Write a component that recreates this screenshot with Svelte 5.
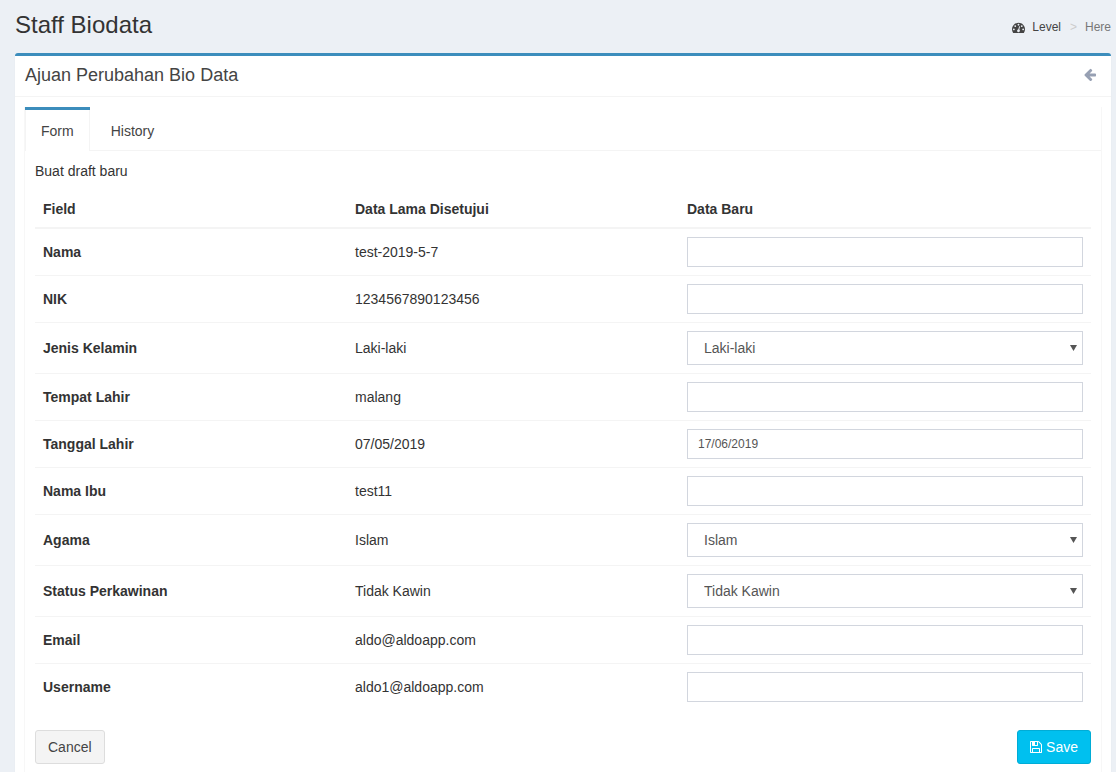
<script>
	const rows = [
		{ label: 'Nama', old: 'test-2019-5-7', type: 'text' },
		{ label: 'NIK', old: '1234567890123456', type: 'text' },
		{ label: 'Jenis Kelamin', old: 'Laki-laki', type: 'select', options: ['Laki-laki', 'Perempuan'] },
		{ label: 'Tempat Lahir', old: 'malang', type: 'text' },
		{ label: 'Tanggal Lahir', old: '07/05/2019', type: 'text', value: '17/06/2019' },
		{ label: 'Nama Ibu', old: 'test11', type: 'text' },
		{ label: 'Agama', old: 'Islam', type: 'select', options: ['Islam', 'Kristen', 'Hindu', 'Budha'] },
		{ label: 'Status Perkawinan', old: 'Tidak Kawin', type: 'select', options: ['Tidak Kawin', 'Kawin'] },
		{ label: 'Email', old: 'aldo@aldoapp.com', type: 'text' },
		{ label: 'Username', old: 'aldo1@aldoapp.com', type: 'text' }
	]
	let tab = 'Form'
</script>

<div class="page">
	<header class="content-header">
		<h1>Staff Biodata</h1>
		<ol class="breadcrumb">
			<li class="level">
				<svg class="gauge" viewBox="0 0 1792 1792" aria-hidden="true"><path fill="currentColor" d="M384 1152q0-53-37.5-90.5t-90.5-37.5-90.5 37.5-37.5 90.5 37.5 90.5 90.5 37.5 90.5-37.5 37.5-90.5zm192-448q0-53-37.5-90.5t-90.5-37.5-90.5 37.5-37.5 90.5 37.5 90.5 90.5 37.5 90.5-37.5 37.5-90.5zm428 481l101-382q6-26-7.5-48.5t-38.5-29.5-48 6.5-30 39.5l-101 382q-60 5-107 43.5t-63 98.5q-20 77 20 146t117 89 146-20 89-117q16-60-6-117t-72-91zm660-33q0-53-37.5-90.5t-90.5-37.5-90.5 37.5-37.5 90.5 37.5 90.5 90.5 37.5 90.5-37.5 37.5-90.5zm-640-640q0-53-37.5-90.5t-90.5-37.5-90.5 37.5-37.5 90.5 37.5 90.5 90.5 37.5 90.5-37.5 37.5-90.5zm448 192q0-53-37.5-90.5t-90.5-37.5-90.5 37.5-37.5 90.5 37.5 90.5 90.5 37.5 90.5-37.5 37.5-90.5zm320 448q0 261-141 483-19 29-54 29h-1402q-35 0-54-29-141-221-141-483 0-182 71-348t191-286 286-191 348-71 348 71 286 191 191 286 71 348z"/></svg>
				Level
			</li>
			<li class="sep">&gt;</li>
			<li class="here">Here</li>
		</ol>
	</header>

	<section class="box">
		<div class="box-header">
			<h3>Ajuan Perubahan Bio Data</h3>
			<svg class="back" viewBox="0 0 1792 1792" aria-hidden="true"><path fill="currentColor" d="M1664 896v128q0 53-32.5 87.5t-84.5 34.5h-704l293 294q38 36 38 90t-38 90l-75 76q-37 37-90 37-52 0-91-37l-651-652q-37-37-37-90 0-52 37-91l651-650q38-38 91-38 52 0 90 38l75 74q38 38 38 91t-38 91l-293 293h704q52 0 84.5 34.5t32.5 87.5z" transform="translate(0 -64)"/></svg>
		</div>
		<div class="box-body">
			<div class="tabs">
				<ul class="nav">
					{#each ['Form', 'History'] as name}
						<li class:active={tab === name}>
							<button type="button" on:click={() => (tab = name)}>{name}</button>
						</li>
					{/each}
				</ul>
				<div class="tab-content">
					<p>Buat draft baru</p>
					<table>
						<thead>
							<tr>
								<th class="c1">Field</th>
								<th class="c2">Data Lama Disetujui</th>
								<th>Data Baru</th>
							</tr>
						</thead>
						<tbody>
							{#each rows as row}
								<tr>
									<th>{row.label}</th>
									<td>{row.old}</td>
									<td>
										{#if row.type === 'select'}
											<select value={row.old}>
												{#each row.options as opt}
													<option>{opt}</option>
												{/each}
											</select>
										{:else}
											<input type="text" value={row.value ?? ''} />
										{/if}
									</td>
								</tr>
							{/each}
						</tbody>
					</table>
					<div class="actions">
						<button type="button" class="btn">Cancel</button>
						<button type="button" class="btn info">
							<svg class="save" viewBox="128 0 1536 1792" aria-hidden="true"><path fill="currentColor" d="M512 1536h768v-384h-768v384zm896 0h128v-896q0-14-10-38.5t-20-34.5l-281-281q-10-10-34-20t-39-10v416q0 40-28 68t-68 28h-576q-40 0-68-28t-28-68v-416h-128v1280h128v-416q0-40 28-68t68-28h832q40 0 68 28t28 68v416zm-384-928v-320q0-13-9.5-22.5t-22.5-9.5h-192q-13 0-22.5 9.5t-9.5 22.5v320q0 13 9.5 22.5t22.5 9.5h192q13 0 22.5-9.5t9.5-22.5zm640 32v928q0 40-28 68t-68 28h-1344q-40 0-68-28t-28-68v-1344q0-40 28-68t68-28h928q40 0 88 20t76 48l280 280q28 28 48 76t20 88z"/></svg>
							Save
						</button>
					</div>
				</div>
			</div>
		</div>
	</section>
</div>

<style>
	:global(body) {
		background: #ecf0f5;
		overflow: hidden;
	}
	.page {
		height: 772px;
		overflow: hidden;
		padding: 0 5px 0 15px;
		font-family: 'Liberation Sans', Arial, sans-serif;
		font-size: 14px;
		line-height: 20px;
		color: #333;
	}
	.content-header {
		display: flex;
		justify-content: space-between;
		align-items: center;
		height: 53px;
		padding-bottom: 3px;
		box-sizing: border-box;
	}
	h1 {
		margin: 0;
		font-size: 24px;
		font-weight: 400;
		line-height: 26px;
	}
	.breadcrumb {
		display: flex;
		list-style: none;
		margin: 4px 0 0;
		padding: 0;
		font-size: 12px;
	}
	.level {
		display: flex;
		align-items: center;
		gap: 7px;
		color: #444;
	}
	.gauge {
		width: 13px;
		height: 13px;
	}
	.sep {
		color: #ccc;
		padding: 0 8px 0 9px;
	}
	.here {
		color: #777;
	}
	.box {
		background: #fff;
		border-top: 3px solid #3c8dbc;
		border-radius: 3px;
		box-shadow: 0 1px 1px rgba(0, 0, 0, 0.1);
		min-height: 760px;
	}
	.box-header {
		display: flex;
		justify-content: space-between;
		align-items: center;
		height: 41px;
		box-sizing: border-box;
		padding: 0 14px 2px 10px;
		border-bottom: 1px solid #f4f4f4;
		color: #444;
	}
	h3 {
		margin: 0;
		font-size: 18px;
		font-weight: 400;
		line-height: 20px;
	}
	.back {
		width: 14px;
		height: 14px;
		color: #97a0b3;
	}
	.box-body {
		padding: 10px;
	}
	.tabs {
		box-shadow: -1px 0 0 #f7f7f7, 1px 0 0 #f7f7f7;
	}
	.nav {
		display: flex;
		list-style: none;
		margin: 0;
		padding: 0;
		border-bottom: 1px solid #f4f4f4;
	}
	.nav li {
		border-top: 3px solid transparent;
		margin-right: 5px;
	}
	.nav li.active {
		border-top-color: #3c8dbc;
		margin-bottom: -1px;
	}
	.nav button {
		display: block;
		background: #fff;
		border: 0;
		border-right: 1px solid transparent;
		border-left: 1px solid transparent;
		padding: 11px 15px 9px;
		font: inherit;
		color: #444;
		cursor: pointer;
	}
	.nav li.active button {
		border-left-color: #f4f4f4;
		border-right-color: #f4f4f4;
		padding-bottom: 10px;
	}
	.tab-content {
		padding: 10px;
	}
	p {
		margin: 0 0 10px;
	}
	table {
		width: 100%;
		border-collapse: collapse;
		table-layout: fixed;
		margin-bottom: 20px;
	}
	th,
	td {
		padding: 8px;
		text-align: left;
		vertical-align: middle;
	}
	.c1 {
		width: 296px;
	}
	.c2 {
		width: 316px;
	}
	thead th {
		border-bottom: 2px solid #f4f4f4;
	}
	tbody tr + tr th,
	tbody tr + tr td {
		border-top: 1px solid #f4f4f4;
	}
	input,
	select {
		display: block;
		width: 100%;
		box-sizing: border-box;
		border: 1px solid #d2d6de;
		border-radius: 0;
		background-color: #fff;
		color: #555;
		outline: none;
	}
	input {
		height: 30px;
		padding: 5px 10px;
		font: 12px/18px 'Liberation Sans', Arial, sans-serif;
	}
	select {
		appearance: none;
		height: 34px;
		padding: 6px 12px 6px 16px;
		font: 14px/20px 'Liberation Sans', Arial, sans-serif;
		background-image: url("data:image/svg+xml,%3Csvg xmlns='http://www.w3.org/2000/svg' width='7' height='6'%3E%3Cpath d='M0 0h7L3.5 6z' fill='%23555'/%3E%3C/svg%3E");
		background-repeat: no-repeat;
		background-position: right 5px center;
	}
	.actions {
		display: flex;
		justify-content: space-between;
	}
	.btn {
		display: flex;
		align-items: center;
		gap: 4px;
		height: 34px;
		box-sizing: border-box;
		padding: 6px 12px;
		background: #f4f4f4;
		border: 1px solid #ddd;
		border-radius: 3px;
		color: #444;
		font: inherit;
		cursor: pointer;
	}
	.info {
		background: #00c0ef;
		border-color: #00acd6;
		color: #fff;
	}
	.save {
		width: 12px;
		height: 14px;
	}
</style>
